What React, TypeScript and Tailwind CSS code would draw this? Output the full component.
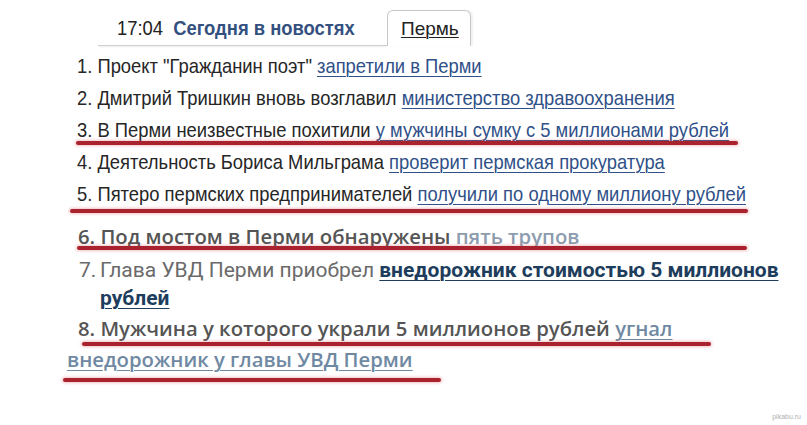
import React from "react";

const narrow = "origin-left scale-x-[0.875] whitespace-nowrap";
const link = "text-[#2f5088] underline underline-offset-[3px] decoration-1";

function Red({ left, width, top }: { left: number; width: number; top: number }) {
  return (
    <div
      className="absolute h-[4px] rounded-full bg-[#a8232d] shadow-[0_0_3px_1px_rgba(220,80,90,0.35)]"
      style={{ left, width, top }}
    />
  );
}

export default function App() {
  return (
    <div className="relative w-[807px] h-[425px] overflow-hidden bg-white font-[family-name:'Liberation_Sans',Arial,sans-serif] text-[#262626]">
      {/* header */}
      <div className="flex pl-[98px] pt-[10px] h-[46px]">
        <div className="flex items-center w-[289px] h-[36px] border-b border-[#cfcfcf] shadow-[0_2px_2px_-1px_rgba(0,0,0,0.08)] pl-[19px]">
          <div className="origin-left scale-x-[0.92] whitespace-nowrap text-[20px] leading-none">
            <span className="text-[#222]">17:04</span>
            <span className="ml-[11px] text-[#34507f] font-bold">Сегодня в новостях</span>
          </div>
        </div>
        <div className="w-[84px] h-[36px] border border-b-0 border-[#c9c9c9] rounded-t-[6px] shadow-[2px_0_2px_rgba(0,0,0,0.06)] flex items-center pl-[13px]">
          <span className="whitespace-nowrap text-[19px] leading-none underline underline-offset-[2px] decoration-1 text-[#222]">Пермь</span>
        </div>
      </div>

      {/* list 1-5 */}
      <div className="flex flex-col pl-[77px] pt-[4px] text-[21px]">
        <div className="h-[32px] leading-[32px]">
          <div className={narrow}>
            1. Проект "Гражданин поэт" <span className={link}>запретили в Перми</span>
          </div>
        </div>
        <div className="h-[32px] leading-[32px]">
          <div className={narrow}>
            2. Дмитрий Тришкин вновь возглавил <span className={link}>министерство здравоохранения</span>
          </div>
        </div>
        <div className="h-[32px] leading-[32px]">
          <div className={narrow}>
            3. В Перми неизвестные похитили <span className={link}>у мужчины сумку с 5 миллионами рублей</span>
          </div>
        </div>
        <div className="h-[32px] leading-[32px]">
          <div className={narrow}>
            4. Деятельность Бориса Мильграма <span className={link}>проверит пермская прокуратура</span>
          </div>
        </div>
        <div className="h-[32px] leading-[32px]">
          <div className={narrow}>
            5. Пятеро пермских предпринимателей <span className={link}>получили по одному миллиону рублей</span>
          </div>
        </div>
      </div>

      {/* line 6 */}
      <div className="pl-[78px] mt-[10px] h-[32px] leading-[32px] font-[family-name:'Open_Sans',sans-serif] font-semibold text-[20.3px] text-[#555] whitespace-nowrap">
        <span className="underline underline-offset-[3px] decoration-1">6. Под мостом в Перми обнаружены </span>
        <span className="text-[#8d9cae] underline underline-offset-[3px] decoration-1">пять трупов</span>
      </div>

      {/* line 7 */}
      <div className="flex pl-[79px] mt-[4px] text-[21px] leading-[28px] font-[family-name:Roboto,sans-serif] whitespace-nowrap">
        <span className="text-[#6a6a6a] w-[21px]">7.</span>
        <div>
          <span className="text-[#6a6a6a]">Глава УВД Перми приобрел </span>
          <span className="font-bold text-[#1e3d5c] underline underline-offset-[3px] decoration-1">
            внедорожник стоимостью 5 миллионов
            <br />
            рублей
          </span>
        </div>
      </div>

      {/* line 8 */}
      <div className="mt-[1px] font-[family-name:'Open_Sans',sans-serif] font-semibold text-[20.3px] leading-[31px] whitespace-nowrap">
        <div className="pl-[78px] text-[#555]">
          8. Мужчина у которого украли 5 миллионов рублей{" "}
          <span className="text-[#7089a3] underline underline-offset-[3px] decoration-1">угнал</span>
        </div>
        <div className="pl-[67px]">
          <span className="text-[#7089a3] underline underline-offset-[3px] decoration-1">внедорожник у главы УВД Перми</span>
        </div>
      </div>

      {/* red marker lines drawn over the text */}
      <Red left={76} width={662} top={141} />
      <Red left={70} width={678} top={209} />
      <Red left={77} width={670} top={246} />
      <Red left={82} width={629} top={342} />
      <Red left={63} width={378} top={378} />

      <div className="absolute right-[6px] bottom-[3px] text-[7px] text-[#b0b0b0]">pikabu.ru</div>
    </div>
  );
}
